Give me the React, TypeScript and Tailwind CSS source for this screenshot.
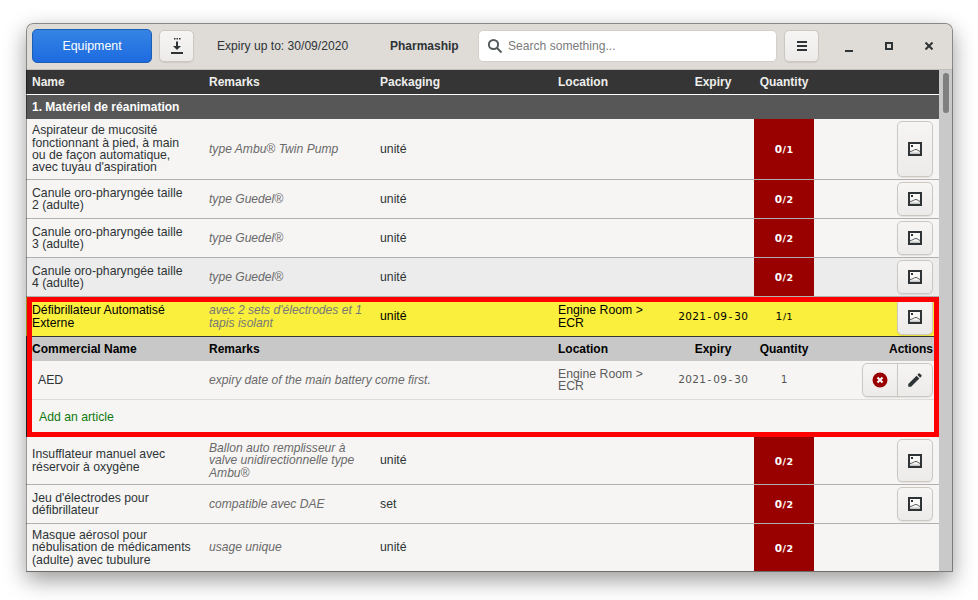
/**
 * Equipment list window: toolbar, table with one expanded row.
 */
import type { ReactNode } from "react";
import { MdEdit } from "react-icons/md";

const btn =
  "flex items-center justify-center border border-[#cdc7c2] rounded-[5px] bg-gradient-to-b from-[#f6f5f4] to-[#edebe9] shadow-[0_1px_1px_rgba(0,0,0,0.08)]";
const cellText = "text-[12.25px] leading-[12.3px] whitespace-pre-line";
const remarkText = "text-[12.1px] leading-[12.3px] whitespace-pre-line italic";

interface Item {
  name: string;
  remarks: string;
  packaging: string;
  total: number;
  height: string;
  bg?: string;
  noButton?: boolean;
}

const firstRows: Item[] = [
  {
    name: "Aspirateur de mucosité\nfonctionnant à pied, à main\nou de façon automatique,\navec tuyau d'aspiration",
    remarks: "type Ambu® Twin Pump",
    packaging: "unité",
    total: 1,
    height: "h-[61px]",
  },
  { name: "Canule oro-pharyngée taille\n2 (adulte)", remarks: "type Guedel®", packaging: "unité", total: 2, height: "h-[39px]" },
  { name: "Canule oro-pharyngée taille\n3 (adulte)", remarks: "type Guedel®", packaging: "unité", total: 2, height: "h-[39px]" },
  { name: "Canule oro-pharyngée taille\n4 (adulte)", remarks: "type Guedel®", packaging: "unité", total: 2, height: "h-[39px]", bg: "bg-[#ececec]" },
];

const lastRows: Item[] = [
  {
    name: "Insufflateur manuel avec\nréservoir à oxygène",
    remarks: "Ballon auto remplisseur à\nvalve unidirectionnelle type\nAmbu®",
    packaging: "unité",
    total: 2,
    height: "h-[48px]",
  },
  { name: "Jeu d'électrodes pour\ndéfibrillateur", remarks: "compatible avec DAE", packaging: "set", total: 2, height: "h-[39px]" },
  {
    name: "Masque aérosol pour\nnébulisation de médicaments\n(adulte) avec tubulure",
    remarks: "usage unique",
    packaging: "unité",
    total: 2,
    height: "h-[48px]",
    noButton: true,
  },
];

// fixed 7px cell per character, the app's monospace has a plain zero
function Mono({ text, className }: { text: string; className?: string }) {
  return (
    <span className={`inline-flex font-['DejaVu_Sans',sans-serif] text-[10.5px] ${className ?? ""}`}>
      {text.split("").map((ch, i) => (
        <span key={i} className="inline-block w-[7px] text-center">
          {ch}
        </span>
      ))}
    </span>
  );
}

function ImageIcon() {
  return (
    <svg width="14" height="14" viewBox="0 0 14 14" fill="none">
      <rect x="1" y="1" width="12" height="12" fill="#f8f8f7" stroke="#2e3436" strokeWidth="2" />
      <rect x="3" y="3" width="2" height="2" fill="#2e3436" />
      <path d="M2 9.5 C4.5 9.5 6 7.5 8 7.5 C9.5 7.5 10.5 9 12 9.5" stroke="#2e3436" strokeWidth="1" opacity="0.8" />
      <rect x="2" y="10.5" width="10" height="1.5" fill="#2e3436" opacity="0.25" />
    </svg>
  );
}

function ImageButton() {
  return <button type="button" className={`${btn} h-full w-[36px]`}><ImageIcon /></button>;
}

function Quantity({ have, total }: { have: number; total: number }) {
  return (
    <span className="inline-flex translate-y-[1px] items-baseline font-['DejaVu_Sans',sans-serif]">
      <span className="w-[8px] text-center text-[10.5px] font-bold">{have}</span>
      <span className="text-[9.5px] font-bold tracking-[0.5px]">/{total}</span>
    </span>
  );
}

function Cells({ children }: { children: ReactNode }) {
  return <div className="flex h-full w-full items-stretch">{children}</div>;
}

function Row({ item }: { item: Item }) {
  return (
    <div className={`${item.height} shrink-0 border-b border-[#b2b0ae] ${item.bg ?? "bg-[#f6f5f4]"}`}>
      <Cells>
        <div className={`${cellText} flex w-[177px] items-center pl-[6px] text-[#2e3436]`}>
          <span>{item.name}</span>
        </div>
        <div className={`${remarkText} flex w-[171px] items-center pl-[6px] text-[#6a6a6a]`}>
          <span>{item.remarks}</span>
        </div>
        <div className="flex w-[178px] items-center pl-[6px] text-[12.25px] text-[#2e3436]">{item.packaging}</div>
        <div className="w-[202px]" />
        <div className="flex w-[60px] items-center justify-center bg-[#990000] text-white">
          <Quantity have={0} total={item.total} />
        </div>
        <div className="flex flex-1 justify-end py-[2px] pr-[6px]">
          {!item.noButton && <ImageButton />}
        </div>
      </Cells>
    </div>
  );
}

function ExpandedRow() {
  return (
    <div className="relative h-[140px] shrink-0">
      <div className="flex h-[40px] border-b border-[#333333] bg-[#f9ef3c] text-black">
        <Cells>
          <div className={`${cellText} flex w-[177px] items-center pl-[6px]`}>
            <span>{"Défibrillateur Automatisé\nExterne"}</span>
          </div>
          <div className={`${remarkText} flex w-[171px] items-center pl-[6px] text-[#777777]`}>
            <span>{"avec 2 sets d'électrodes et 1\ntapis isolant"}</span>
          </div>
          <div className="flex w-[178px] items-center pl-[6px] text-[12.25px]">unité</div>
          <div className={`${cellText} flex w-[120px] items-center pl-[6px]`}>
            <span>{"Engine Room >\nECR"}</span>
          </div>
          <div className="flex w-[82px] items-center justify-center">
            <Mono text="2021-09-30" />
          </div>
          <div className="flex w-[60px] items-center justify-center">
            <span className="inline-flex items-baseline font-['DejaVu_Sans',sans-serif] text-[10.5px]">
              <span className="w-[8px] text-center">1</span>
              <span className="text-[9.5px] tracking-[0.5px]">/1</span>
            </span>
          </div>
          <div className="flex flex-1 justify-end py-[1px] pr-[6px]">
            <ImageButton />
          </div>
        </Cells>
      </div>
      <div className="flex h-[24px] items-center bg-[#c8c8c8] font-bold text-black">
        <div className="w-[177px] pl-[6px]">Commercial Name</div>
        <div className="w-[349px] pl-[6px]">Remarks</div>
        <div className="w-[120px] pl-[6px]">Location</div>
        <div className="w-[82px] text-center">Expiry</div>
        <div className="w-[60px] text-center">Quantity</div>
        <div className="flex-1 pr-[6px] text-right">Actions</div>
      </div>
      <div className="flex h-[39px] items-center border-b border-[#dedcda] bg-[#f6f5f4] text-[12.25px] text-[#2e3436]">
        <div className="w-[177px] pl-[12px]">AED</div>
        <div className="w-[349px] pl-[6px] text-[12.1px] italic text-[#6a6a6a]">expiry date of the main battery come first.</div>
        <div className={`${cellText} w-[120px] pl-[6px] text-[#5c5c5c]`}>{"Engine Room >\nECR"}</div>
        <div className="flex w-[82px] justify-center text-[#555555]">
          <Mono text="2021-09-30" />
        </div>
        <div className="flex w-[60px] justify-center text-[#555555]">
          <Mono text="1" />
        </div>
        <div className="flex flex-1 justify-end pr-[6px]">
          <div className="flex h-[34px]">
            <button type="button" className={`${btn} w-[36px] rounded-r-none`}>
              <svg width="16" height="16" viewBox="0 0 16 16">
                <circle cx="8" cy="8" r="7.5" fill="#990000" />
                <path d="M5.5 5.5 L10.5 10.5 M10.5 5.5 L5.5 10.5" stroke="#f6f5f4" strokeWidth="2.2" />
              </svg>
            </button>
            <button type="button" className={`${btn} -ml-px w-[36px] rounded-l-none`}>
              <MdEdit size={18} color="#2e3436" />
            </button>
          </div>
        </div>
      </div>
      <div className="flex h-[37px] items-center bg-[#f6f5f4] pb-[3px] pl-[13px] text-[12.25px] text-[#0f7a0f]">Add an article</div>

      {/* red highlight drawn over the row */}
      <div className="absolute bottom-0 left-0 top-[39px] w-px bg-[#333333]" />
      <div className="absolute inset-y-0 left-px right-0 border-[5px] border-[#ff0000]" />
    </div>
  );
}

export default function App() {
  return (
    <div className="h-[600px] w-[978px] overflow-hidden bg-white pl-[26px] pt-[23px] font-['Liberation_Sans',Arial,sans-serif] text-[12px]">
      <div className="relative flex h-[549px] w-[927px] flex-col overflow-hidden rounded-t-[7px] shadow-[0_8px_22px_rgba(0,0,0,0.4)]">
        {/* toolbar */}
        <div className="flex h-[47px] shrink-0 items-center border-b border-[#c4bfba] bg-[#dfdbd7] pl-[6px] text-[#2e3436]">
          <button type="button" className="h-[34px] w-[120px] rounded-[5px] border border-[#1a5fb4] bg-gradient-to-b from-[#3584e4] to-[#1e6ae0] text-[12.4px] text-white">
            Equipment
          </button>
          <button type="button" className={`${btn} ml-[7px] h-[32px] w-[35px]`}>
            <svg width="16" height="18" viewBox="0 0 16 18" fill="#2e3436">
              <rect x="5" y="1" width="1.5" height="1.5" />
              <rect x="7.5" y="1" width="1.5" height="1.5" />
              <rect x="10" y="1" width="1.5" height="1.5" />
              <path d="M7 4.5 H9 V9 H12 L8 13 L4 9 H7 Z" />
              <rect x="2" y="15" width="12" height="2" />
            </svg>
          </button>
          <span className="ml-[23px] w-[173px] text-[12.1px]">Expiry up to: 30/09/2020</span>
          <span className="w-[88px] font-bold">Pharmaship</span>
          <div className="flex h-[32px] w-[299px] items-center rounded-[5px] border border-[#d4cfca] bg-white pl-[8px]">
            <svg width="16" height="16" viewBox="0 0 16 16" fill="none" stroke="#555b5d" strokeWidth="2">
              <circle cx="6.5" cy="6.5" r="4.6" />
              <path d="M10 10 L14.5 14.5" />
            </svg>
            <span className="ml-[5px] text-[12.1px] text-[#7b7b7b]">Search something...</span>
          </div>
          <button type="button" className={`${btn} ml-[7px] h-[32px] w-[35px]`}>
            <svg width="10" height="10" viewBox="0 0 10 10" fill="#2e3436">
              <rect width="10" height="2" />
              <rect y="4" width="10" height="2" />
              <rect y="8" width="10" height="2" />
            </svg>
          </button>
          <div className="ml-[10px] flex">
            <div className="flex h-[32px] w-[40px] items-center justify-center">
              <svg width="8" height="8" viewBox="0 0 8 8" fill="#2e3436" className="translate-y-[2px]">
                <rect y="6" width="8" height="2" />
              </svg>
            </div>
            <div className="flex h-[32px] w-[40px] items-center justify-center">
              <svg width="8" height="8" viewBox="0 0 8 8" fill="none" stroke="#2e3436" strokeWidth="2">
                <rect x="1" y="1" width="6" height="6" />
              </svg>
            </div>
            <div className="flex h-[32px] w-[40px] items-center justify-center">
              <svg width="8" height="8" viewBox="0 0 8 8" fill="none" stroke="#2e3436" strokeWidth="2">
                <path d="M0.5 0.5 L7.5 7.5 M7.5 0.5 L0.5 7.5" />
              </svg>
            </div>
          </div>
        </div>

        <div className="flex min-h-0 flex-1">
          <div className="flex w-[913px] flex-col overflow-hidden">
            {/* column headers */}
            <div className="flex h-[25px] shrink-0 items-center border-b border-white bg-[#353535] font-bold text-[#eeeeec]">
              <div className="w-[177px] pl-[6px]">Name</div>
              <div className="w-[171px] pl-[6px]">Remarks</div>
              <div className="w-[178px] pl-[6px]">Packaging</div>
              <div className="w-[120px] pl-[6px]">Location</div>
              <div className="w-[82px] text-center">Expiry</div>
              <div className="w-[60px] text-center">Quantity</div>
            </div>
            <div className="flex h-[24px] shrink-0 items-center bg-[#575757] pl-[6px] font-bold text-white">
              1. Matériel de réanimation
            </div>
            {firstRows.map((item) => (
              <Row key={item.name} item={item} />
            ))}
            <ExpandedRow />
            {lastRows.map((item) => (
              <Row key={item.name} item={item} />
            ))}
          </div>
          {/* scrollbar */}
          <div className="flex-1 bg-[#c9c9c9] pl-[4px] pt-[3px]">
            <div className="h-[40px] w-[6px] rounded-full bg-[#7f7f7f]" />
          </div>
        </div>

        {/* window edge */}
        <div className="pointer-events-none absolute inset-0 rounded-t-[7px] shadow-[inset_0_0_0_1px_rgba(0,0,0,0.38)]" />
      </div>
    </div>
  );
}
